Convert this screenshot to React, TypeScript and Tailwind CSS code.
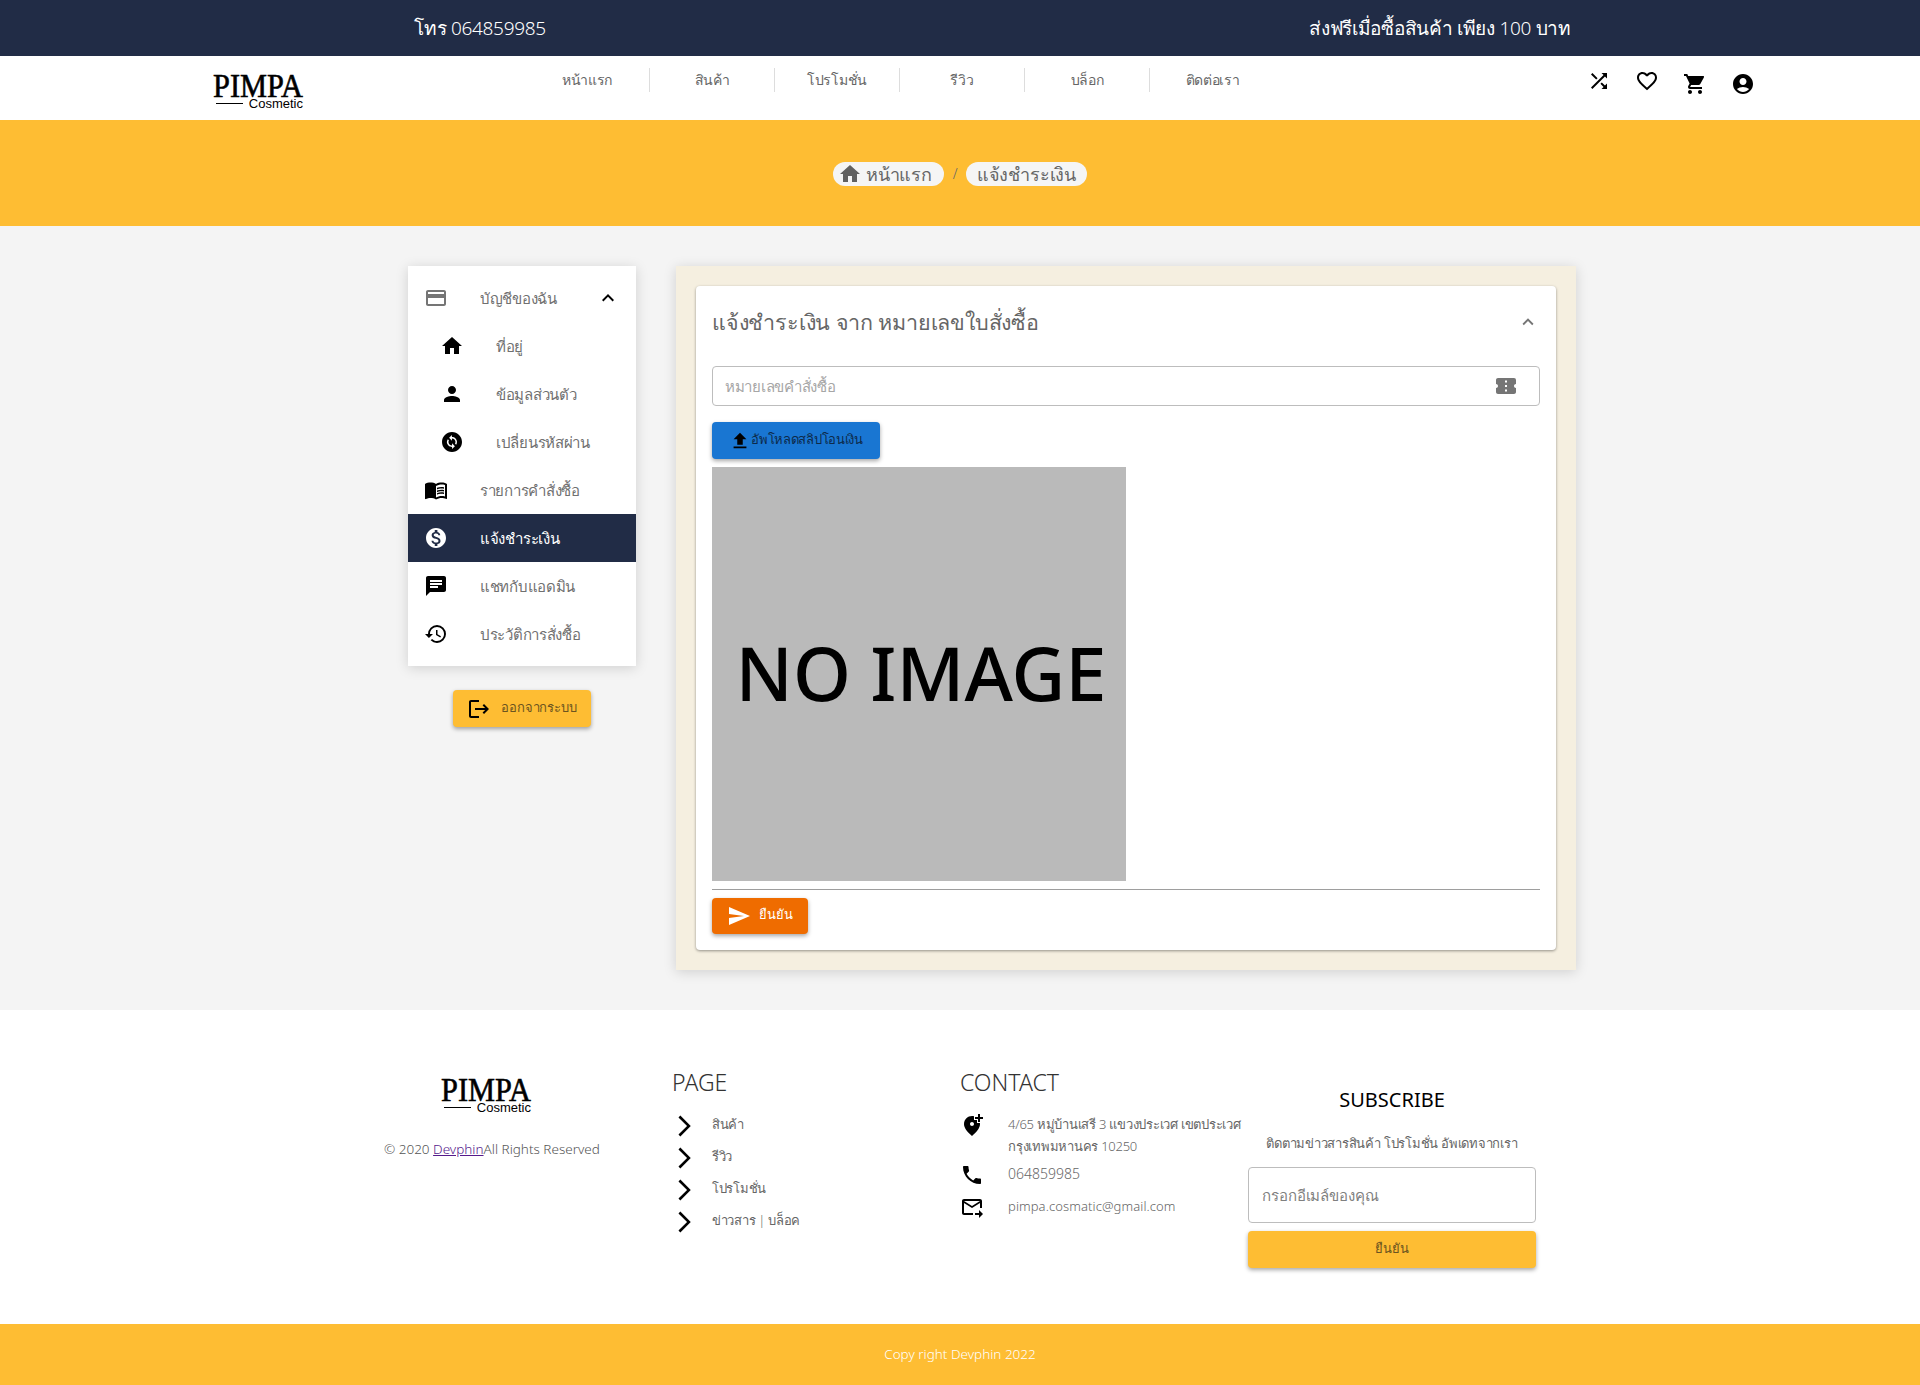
import {
  MdAccountCircle,
  MdAddLocationAlt,
  MdArrowForwardIos,
  MdChangeCircle,
  MdChat,
  MdConfirmationNumber,
  MdCreditCard,
  MdExpandLess,
  MdFavoriteBorder,
  MdFileUpload,
  MdForwardToInbox,
  MdHistory,
  MdHome,
  MdKeyboardArrowUp,
  MdLogout,
  MdMenuBook,
  MdMonetizationOn,
  MdPerson,
  MdPhone,
  MdSend,
  MdShoppingCart,
  MdShuffle,
} from "react-icons/md";

const navItems = ["หน้าแรก", "สินค้า", "โปรโมชั่น", "รีวิว", "บล็อก", "ติดต่อเรา"];
const pageLinks = ["สินค้า", "รีวิว", "โปรโมชั่น", "ข่าวสาร | บล็อค"];

function Logo() {
  return (
    <svg viewBox="0 0 90 38" className="w-[90px] h-[38px] text-black overflow-visible">
      <text
        x="0"
        y="26"
        fontSize="34"
        textLength="90"
        lengthAdjust="spacingAndGlyphs"
        fill="currentColor"
        stroke="currentColor"
        strokeWidth="0.6"
        className="font-['Liberation_Serif',serif] font-normal"
      >
        PIMPA
      </text>
      <line x1="3" y1="32.5" x2="30" y2="32.5" stroke="currentColor" strokeWidth="1" />
      <text
        x="90"
        y="36.5"
        fontSize="13"
        textAnchor="end"
        fill="currentColor"
        className="font-['Liberation_Sans',sans-serif] font-normal"
      >
        Cosmetic
      </text>
    </svg>
  );
}

function MenuRow({
  icon,
  label,
  sub,
  active,
}: {
  icon: React.ReactNode;
  label: string;
  sub?: boolean;
  active?: boolean;
}) {
  return (
    <div
      className={`h-12 flex items-center text-[15px] tracking-[-0.3px] font-light ${sub ? "pl-[32px]" : "pl-4"} ${
        active ? "bg-[#212c46] text-white" : "text-[#707070]"
      }`}
    >
      <div className={`w-[24px] mr-[32px] text-[24px] ${active ? "text-white" : "text-black"}`}>{icon}</div>
      <span>{label}</span>
    </div>
  );
}

export default function App() {
  return (
    <div className="w-[1920px] bg-white font-['Noto_Sans',sans-serif] font-light">
      <div className="h-14 bg-[#212c46] grid grid-cols-2 text-center text-white text-[19px] tracking-[-0.3px] leading-[56px]">
        <div>โทร 064859985</div>
        <div>ส่งฟรีเมื่อซื้อสินค้า เพียง 100 บาท</div>
      </div>

      <div className="h-16 bg-white flex relative">
        <div className="w-[525px] pl-[213px] pt-[15px]">
          <Logo />
        </div>
        <div className="flex h-6 mt-3">
          {navItems.map((item, i) => (
            <div
              key={item}
              className={`w-[125px] text-center text-[14px] tracking-[-0.3px] leading-6 text-[#666666] ${
                i < navItems.length - 1 ? "border-r border-[#dddddd]" : ""
              }`}
            >
              {item}
            </div>
          ))}
        </div>
        <div className="flex gap-[24px] ml-[312px] mt-[13px] text-black h-6">
          <MdShuffle size={24} />
          <MdFavoriteBorder size={24} />
          <MdShoppingCart size={24} className="mt-[3px]" />
          <MdAccountCircle size={24} className="mt-[3px]" />
        </div>
      </div>

      <div className="h-[106px] bg-[#febd33] flex items-center justify-center text-[18px] tracking-[-0.2px] text-[#666666]">
        <div className="mt-[2px] w-[111px] h-6 pl-[5px] rounded-xl bg-[#f5f5f5] flex items-center gap-1 leading-6">
          <MdHome size={24} className="text-[#616161]" />
          หน้าแรก
        </div>
        <span className="text-[14px] w-[22px] text-center">/</span>
        <div className="mt-[2px] w-[121px] h-6 rounded-xl bg-[#f5f5f5] text-center leading-6">แจ้งชำระเงิน</div>
      </div>

      <div className="h-[784px] bg-[#f4f4f4] pt-10 pl-[408px] flex items-start gap-10">
        <div className="w-[228px]">
          <div className="bg-white py-2 shadow-[0_2px_12px_rgba(0,0,0,0.15)]">
            <div className="relative">
              <MenuRow icon={<MdCreditCard className="text-[#757575]" />} label="บัญชีของฉัน" />
              <MdKeyboardArrowUp size={24} className="absolute right-[16px] top-3 text-black" />
            </div>
            <MenuRow sub icon={<MdHome />} label="ที่อยู่" />
            <MenuRow sub icon={<MdPerson />} label="ข้อมูลส่วนตัว" />
            <MenuRow sub icon={<MdChangeCircle />} label="เปลี่ยนรหัสผ่าน" />
            <MenuRow icon={<MdMenuBook />} label="รายการคำสั่งซื้อ" />
            <MenuRow active icon={<MdMonetizationOn />} label="แจ้งชำระเงิน" />
            <MenuRow icon={<MdChat />} label="แชทกับแอดมิน" />
            <MenuRow icon={<MdHistory />} label="ประวัติการสั่งซื้อ" />
          </div>
          <div className="mt-6 ml-[45px] w-[138px] h-[37px] rounded bg-[#febd33] shadow-[0_2px_4px_rgba(0,0,0,0.35)] flex items-center justify-center gap-[10px] text-[13px] tracking-[-0.2px] text-[#6b5420]">
            <MdLogout size={24} className="text-black" />
            <span className="pb-[2px]">ออกจากระบบ</span>
          </div>
        </div>

        <div className="w-[900px] h-[704px] bg-[#f5efe0] p-5 shadow-[0_2px_12px_rgba(0,0,0,0.15)]">
          <div className="h-[664px] bg-white rounded px-4 shadow-[0_1px_3px_rgba(0,0,0,0.4)]">
            <div className="h-[80px] pb-2 flex items-center justify-between">
              <span className="text-[21.5px] tracking-[-0.2px] text-[#666666]">แจ้งชำระเงิน จาก หมายเลขใบสั่งซื้อ</span>
              <MdExpandLess size={22} className="text-[#757575] mr-[1px]" />
            </div>
            <div className="h-10 border border-[#bdbdbd] rounded flex items-center justify-between pl-3 pr-[21px] text-[15px] tracking-[-0.3px] text-[#a6a6a6]">
              หมายเลขคำสั่งซื้อ
              <MdConfirmationNumber size={24} className="text-[#757575]" />
            </div>
            <div className="mt-4 w-[168px] h-[37px] rounded bg-[#1976d2] shadow-[0_2px_4px_rgba(0,0,0,0.35)] flex items-center justify-center text-[13px] tracking-[-0.3px] text-[#0d2a4a]">
              <MdFileUpload size={22} className="text-black" />
              <span className="pb-[2px]">อัพโหลดสลิปโอนเงิน</span>
            </div>
            <div className="mt-2 w-[414px] h-[414px] bg-[#bababa] flex items-center justify-center pb-1 pl-1 text-[74px] font-medium text-black whitespace-nowrap">
              NO IMAGE
            </div>
            <div className="mt-2 h-px bg-[#9e9e9e]"></div>
            <div className="mt-2 w-[96px] h-9 rounded bg-[#ef6c00] shadow-[0_2px_4px_rgba(0,0,0,0.35)] flex items-center justify-center gap-2 text-[13px] text-white">
              <MdSend size={24} />
              <span className="pb-[2px]">ยืนยัน</span>
            </div>
          </div>
        </div>
      </div>

      <div className="h-[314px] bg-white flex">
        <div className="w-[384px] shrink-0"></div>
        <div className="w-[288px] shrink-0">
          <div className="pt-[65px] pl-[57px]">
            <Logo />
          </div>
          <div className="mt-[26px] text-[13.5px] text-[#555555]">
            © 2020 <span className="text-[#551a8b] underline">Devphin</span>All Rights Reserved
          </div>
        </div>
        <div className="w-[288px] shrink-0 pt-[55px]">
          <div className="text-[23px] leading-[34px] text-[#333333]">PAGE</div>
          <div className="mt-[10px]">
            {pageLinks.map((link) => (
              <div key={link} className="h-8 flex items-center text-[13px] tracking-[-0.3px] text-[#666666]">
                <MdArrowForwardIos size={26} className="text-black w-[40px] pr-[15px] mt-[2px]" />
                {link}
              </div>
            ))}
          </div>
        </div>
        <div className="w-[288px] shrink-0 pt-[55px]">
          <div className="text-[23px] leading-[34px] text-[#333333]">CONTACT</div>
          <div className="mt-[14px] flex text-[13px] tracking-[-0.25px] leading-[22px] text-[#666666]">
            <MdAddLocationAlt size={24} className="text-black mr-6 shrink-0" />
            <div className="whitespace-nowrap">
              4/65 หมู่บ้านเสรี 3 แขวงประเวศ เขตประเวศ
              <br />
              กรุงเทพมหานคร 10250
            </div>
          </div>
          <div className="mt-[6px] flex text-[14px] leading-[22px] text-[#666666]">
            <MdPhone size={24} className="text-black mr-6 shrink-0" />
            064859985
          </div>
          <div className="mt-[8px] flex text-[13px] tracking-[0.1px] leading-[22px] text-[#666666]">
            <MdForwardToInbox size={24} className="text-black mr-6 shrink-0" />
            pimpa.cosmatic@gmail.com
          </div>
        </div>
        <div className="w-[288px] shrink-0 pt-[75px] text-center">
          <div className="text-[20px] leading-[30px] font-normal text-black">SUBSCRIBE</div>
          <div className="mt-[17px] text-[13px] tracking-[-0.25px] leading-[22px] text-[#666666] whitespace-nowrap">
            ติดตามข่าวสารสินค้า โปรโมชั่น อัพเดทจากเรา
          </div>
          <div className="mt-[13px] h-14 border border-[#bdbdbd] rounded flex items-center pl-[13px] text-[15px] tracking-[-0.1px] text-[#808080]">
            กรอกอีเมล์ของคุณ
          </div>
          <div className="mt-2 h-[37px] pb-[2px] rounded bg-[#febd33] shadow-[0_2px_4px_rgba(0,0,0,0.35)] flex items-center justify-center text-[13px] text-[#6b5420]">
            ยืนยัน
          </div>
        </div>
      </div>

      <div className="h-[61px] bg-[#febd33] flex items-center justify-center text-[13.5px] text-white">
        Copy right Devphin 2022
      </div>
    </div>
  );
}
